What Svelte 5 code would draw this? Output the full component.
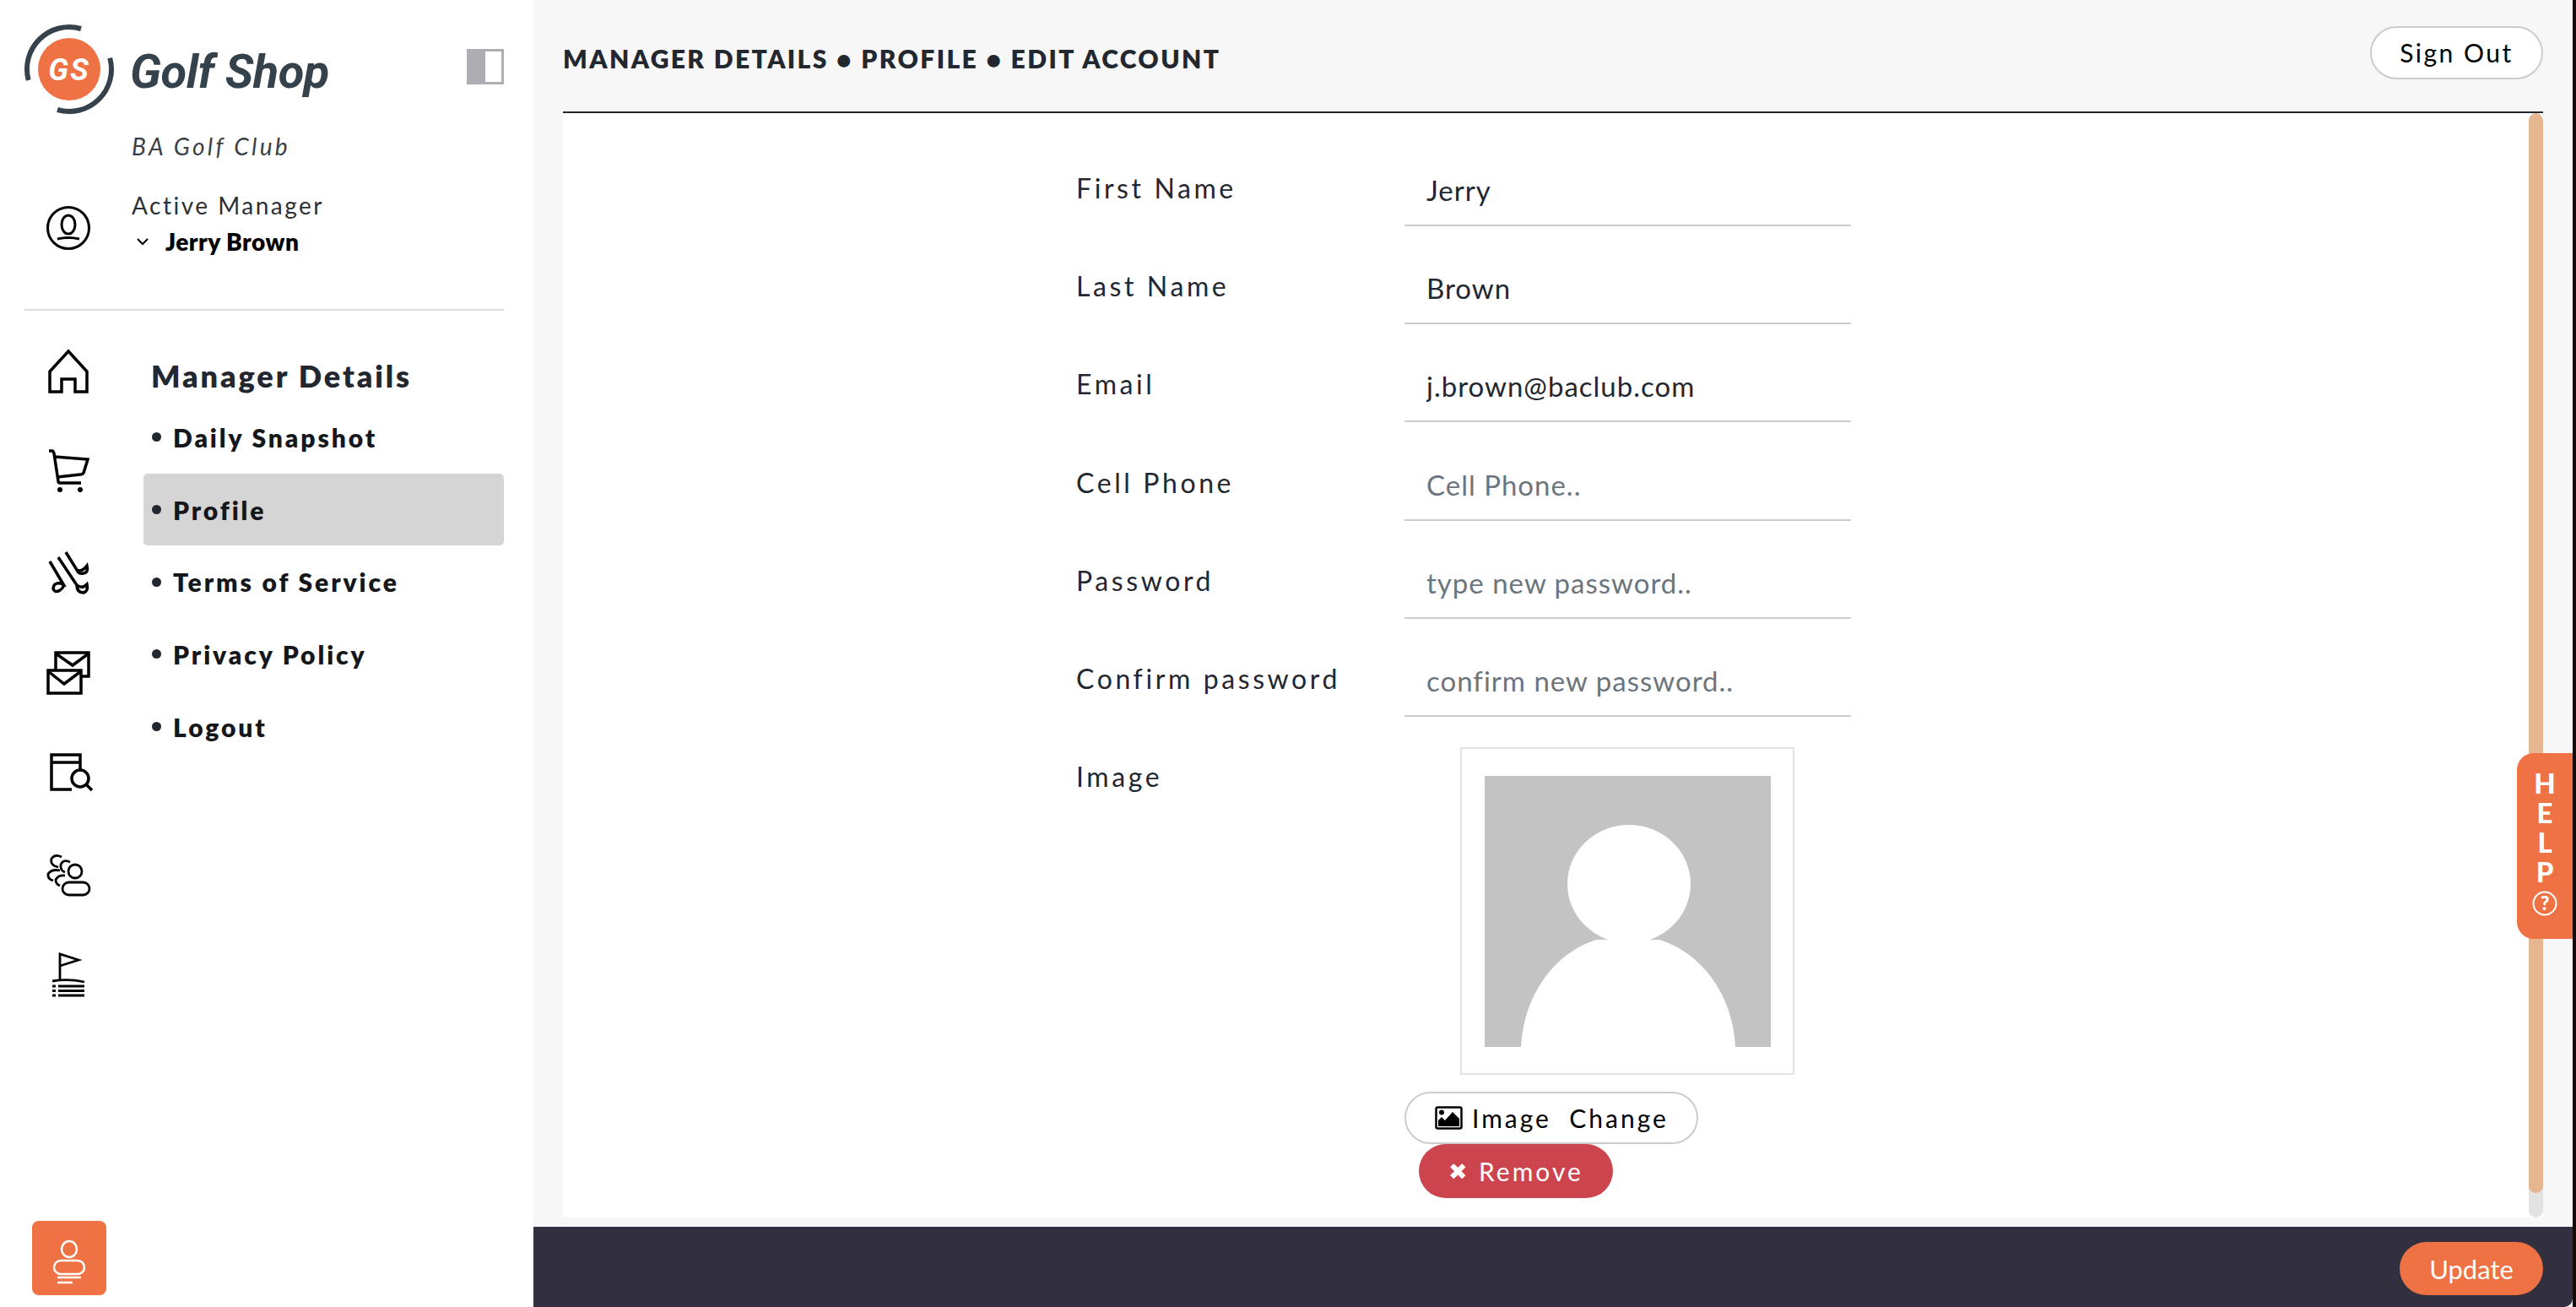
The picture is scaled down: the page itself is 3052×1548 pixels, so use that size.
<script>
  const navItems = [
    { label: 'Daily Snapshot' },
    { label: 'Profile', active: true },
    { label: 'Terms of Service' },
    { label: 'Privacy Policy' },
    { label: 'Logout' }
  ];
  const fields = [
    { label: 'First Name', value: 'Jerry' },
    { label: 'Last Name', value: 'Brown' },
    { label: 'Email', value: 'j.brown@baclub.com' },
    { label: 'Cell Phone', placeholder: 'Cell Phone..' },
    { label: 'Password', placeholder: 'type new password..' },
    { label: 'Confirm password', placeholder: 'confirm new password..' }
  ];
</script>

<div class="page">
  <aside class="sidebar">
    <div class="brand">
      <svg class="logo" viewBox="0 0 120 120" aria-hidden="true">
        <path class="ring" d="M8.700 70 A50 50 0 0 1 71 9" />
        <path class="ring" d="M105.200 43.700 A50 50 0 0 1 43 105" />
        <circle cx="57" cy="57" r="37" fill="#ee7244" />
        <text x="57" y="70" text-anchor="middle" class="gs">GS</text>
      </svg>
      <span class="brand-name">Golf Shop</span>
      <span class="panel-toggle"><span></span></span>
    </div>
    <div class="club">BA Golf Club</div>
    <div class="manager">
      <svg class="manager-icon" viewBox="0 0 56 56" aria-hidden="true">
        <ellipse cx="28" cy="28" rx="24.500" ry="24.500" />
        <ellipse cx="28" cy="24" rx="8" ry="11" />
        <path d="M15 41 Q28 38 41 41" />
      </svg>
      <div class="manager-text">
        <div class="manager-title">Active Manager</div>
        <div class="manager-name">
          <svg class="chev" viewBox="0 0 14 10" aria-hidden="true"><path d="M1 2 L7 8 L13 2" /></svg>
          <b>Jerry Brown</b>
        </div>
      </div>
    </div>
    <hr class="divider" />
    <div class="side-body">
      <nav class="rail">
        <svg viewBox="0 0 56 56" aria-hidden="true"><path d="M28 4 L50 28 V52 H36 V37 H20 V52 H6 V28 Z" /></svg>
        <svg viewBox="0 0 56 56" aria-hidden="true">
          <path d="M5 3 H9 Q10 3 11 6 L16 39 Q16 41 18 41 H43" />
          <path d="M12 10 L51 13 L46 29 Q45 31 42 31 L15 34" />
          <circle class="fill" cx="18" cy="49" r="3" /><circle class="fill" cx="42" cy="49" r="3" />
        </svg>
        <svg viewBox="0 0 56 56" aria-hidden="true">
          <path d="M6 15 L22 42 Q11 38 10 47 Q12 53 18 49 Q23 46 22 42" />
          <path d="M16 10 L38 43 Q44 48 50 42 Q52 50 46 52 Q38 52 38 43" />
          <path d="M25 4 L38 25 Q44 28 50 20 Q52 28 46 29 Q40 30 38 25" />
        </svg>
        <svg viewBox="0 0 56 56" aria-hidden="true">
          <path d="M13 24 V4 H52 V32 H44" />
          <path d="M13 5 L33 19 L52 5" />
          <path d="M4 25 H43 V52 H4 Z" />
          <path d="M4 26 L23 41 L43 26" />
        </svg>
        <svg viewBox="0 0 56 56" aria-hidden="true">
          <path d="M32 47 H8 V6 H42 V24" />
          <path d="M8 15 H42" />
          <circle cx="42" cy="34" r="10" />
          <path d="M49 41 L56 48" />
        </svg>
        <svg viewBox="0 0 56 56" aria-hidden="true">
          <path class="thin" d="M20 8 Q12 4 8 10 Q6 18 16 20" />
          <path class="thin" d="M30 14 Q22 10 19 17 Q18 24 24 26" />
          <circle class="thin" cx="36" cy="25" r="8" />
          <path class="thin" d="M18 24 Q8 22 4 28 Q3 34 10 36" />
          <path class="thin" d="M24 30 Q16 29 13 35 Q13 40 18 42" />
          <rect class="thin" x="21" y="38" width="32" height="15" rx="7.500" />
        </svg>
        <svg viewBox="0 0 56 56" aria-hidden="true">
          <path class="thin" d="M18 36 V4 L40 11 L18 18" />
          <path class="thin" d="M9 36 Q28 33 47 37" />
          <path class="thin" d="M16 42 H47 M16 47.500 H47 M16 53 H47" />
          <path class="thin" d="M9 42 H13 M9 47.500 H13 M9 53 H13" />
        </svg>
      </nav>
      <div class="menu">
        <h2>Manager Details</h2>
        <ul>
          {#each navItems as item}
            <li class:active={item.active}><i></i>{item.label}</li>
          {/each}
        </ul>
      </div>
    </div>
    <button class="account" aria-label="Account">
      <svg viewBox="0 0 48 56" aria-hidden="true">
        <ellipse cx="24" cy="17.500" rx="9" ry="9.500" />
        <rect x="6" y="31" width="36" height="16" rx="8" />
        <path d="M10 51 H38 M10 57 H28" />
      </svg>
    </button>
  </aside>

  <main class="main">
    <header class="topbar">
      <h1>MANAGER DETAILS • PROFILE • EDIT ACCOUNT</h1>
      <button class="sign-out">Sign Out</button>
    </header>
    <section class="content">
      <form class="form">
        {#each fields as f}
          <div class="row">
            <label for={f.label}>{f.label}</label>
            <input id={f.label} value={f.value ?? ''} placeholder={f.placeholder ?? ''} />
          </div>
        {/each}
        <div class="row image-row">
          <span class="field-label">Image</span>
          <div class="image-col">
            <div class="frame">
              <svg viewBox="0 0 339 321" aria-hidden="true">
                <rect width="339" height="321" fill="#c3c3c3" />
                <ellipse cx="171" cy="128" rx="73" ry="70" fill="#fff" />
                <path fill="#fff" d="M43 321 C46 260 82 210 132 194 L207 194 C258 210 294 260 297 321 Z" />
              </svg>
            </div>
            <button type="button" class="change">
              <svg viewBox="0 0 33 28" aria-hidden="true">
                <rect x="1.500" y="1.500" width="30" height="25" rx="2" fill="#fff" stroke="#000" stroke-width="2.500" />
                <circle cx="8" cy="7.500" r="3" fill="#000" />
                <path d="M4 24 V17 L8 13 L12 17 L21 7 L29 15 V24 Z" fill="#000" />
              </svg>
              Image&nbsp; Change
            </button>
            <button type="button" class="remove"><span class="x">✖</span>Remove</button>
          </div>
        </div>
      </form>
      <div class="scrollbar"><div class="thumb"></div><div class="track"></div></div>
    </section>
    <footer class="footer"><button class="update">Update</button></footer>
    <aside class="help">
      <span>H</span><span>E</span><span>L</span><span>P</span>
      <svg viewBox="0 0 30 30" aria-hidden="true">
        <circle cx="15" cy="15" r="13.500" fill="none" stroke="#fff" stroke-width="2" />
        <text x="15" y="23" text-anchor="middle">?</text>
      </svg>
    </aside>
  </main>
</div>

<style>
  :global(body) { margin: 0; background: #170a0a; }
  * { box-sizing: border-box; }
  .page {
    width: 3048px; height: 1548px; display: flex; overflow: hidden;
    font-family: Lato, "Open Sans", sans-serif; color: #212529;
  }
  button { font-family: inherit; cursor: pointer; }

  .sidebar {
    width: 632px; flex: none; background: #fff; display: flex; flex-direction: column;
    padding: 25px 35px 14px 29px;
  }
  .brand { display: flex; align-items: center; height: 120px; }
  .logo { width: 120px; height: 120px; margin-left: -4px; flex: none; }
  .ring { fill: none; stroke: #36424b; stroke-width: 6; }
  .gs { font: italic 700 36px Roboto, sans-serif; fill: #fff; letter-spacing: 2px; }
  .brand-name {
    font: italic 700 56px Roboto, sans-serif; color: #36424b; margin-left: 9px;
    letter-spacing: -0.500px; white-space: nowrap;
  }
  .panel-toggle {
    margin-left: auto; width: 44px; height: 42px; border: 3px solid #adadb2; background: #fff;
    display: block; margin-top: -12px;
  }
  .panel-toggle span { display: block; width: 19px; height: 100%; background: #adadb2; }
  .club {
    margin: 11px 0 0 127px; font-size: 28px; line-height: 34px; font-style: italic;
    letter-spacing: 3.300px; color: #3a3f47; font-weight: 400;
  }
  .manager { display: flex; margin-top: 33px; align-items: center; }
  .manager-icon { width: 56px; height: 56px; margin: 8px 0 0 24px; flex: none; fill: none; stroke: #000; stroke-width: 3; }
  .manager-text { margin-left: 47px; }
  .manager-title { font-size: 28px; line-height: 40px; letter-spacing: 2.500px; color: #2b2f36; }
  .manager-name { display: flex; align-items: center; line-height: 46px; font-size: 28px; color: #000; letter-spacing: 0.500px; }
  .manager-name b { font-weight: 800; }
  .chev { width: 14px; height: 10px; margin: 0 20px 0 6px; fill: none; stroke: #000; stroke-width: 2; }
  .divider { border: 0; height: 2px; background: #ddd; margin: 57px 0 0; width: 568px; }

  .side-body { display: flex; flex: 1; margin-top: 44px; }
  .rail { width: 56px; margin-left: 24px; display: flex; flex-direction: column; gap: 63px; flex: none; }
  .rail svg { width: 56px; height: 56px; display: block; overflow: visible; fill: none; stroke: #000; stroke-width: 3.500; }
  .rail svg .fill { fill: #000; stroke: none; }
  .rail svg .thin { stroke-width: 2.800; }
  .menu { width: 427px; margin-left: 61px; }
  .menu h2 { font-size: 36px; font-weight: 800; letter-spacing: 2.900px; color: #23272f; margin: 13px 0 0 9px; line-height: 40px; }
  .menu ul { list-style: none; margin: 10px 0 0; padding: 0; }
  .menu li {
    height: 85.700px; display: flex; align-items: center; padding: 0 0 0 10px;
    font-size: 30px; font-weight: 800; letter-spacing: 2.900px; border-radius: 5px; color: #15171b;
  }
  .menu li i { width: 11px; height: 11px; border-radius: 50%; background: #23272f; margin-right: 14px; flex: none; }
  .menu li.active { background: #d5d5d5; }
  .account {
    width: 88px; height: 88px; margin-left: 9px; background: #ee7244; border: 0; border-radius: 8px;
    padding: 0; display: flex; align-items: center; justify-content: center; flex: none;
  }
  .account svg { width: 48px; height: 56px; fill: none; stroke: #fff; stroke-width: 2.500; overflow: visible; }

  .main { flex: 1; min-width: 0; background: #f7f7f7; display: flex; flex-direction: column; position: relative; }
  .topbar {
    height: 134px; flex: none; margin: 0 35px; border-bottom: 2px solid #23272f;
    display: flex; justify-content: space-between; align-items: flex-start; padding-top: 31px;
  }
  .topbar h1 { margin: 16px 0 0; font-size: 30px; line-height: 44px; font-weight: 800; letter-spacing: 2.400px; color: #23272f; white-space: nowrap; }
  .sign-out {
    width: 205px; height: 63px; border-radius: 32px; border: 2px solid #ccc; background: #fff;
    font-size: 30px; letter-spacing: 2.500px; color: #000; padding: 0 0 2px;
  }
  .content { flex: 1; min-height: 0; margin: 0 35px 11px; background: #fff; display: flex; }
  .form { flex: 1; padding: 31px 0 0 608px; }
  .row { display: flex; height: 116.200px; align-items: flex-start; }
  .row label, .field-label {
    width: 389px; flex: none; font-size: 32px; line-height: 40px; letter-spacing: 3.600px;
    color: #23272f; margin-top: 38px; display: block;
  }
  .row input {
    width: 529px; height: 84px; margin-top: 19px; border: 0; border-bottom: 2px solid #ccc; outline: 0;
    padding: 22px 26px; font: 400 33px Lato, sans-serif; color: #23272f; background: transparent;
    letter-spacing: 1px;
  }
  .row input::placeholder { color: #6c757d; opacity: 1; }
  .image-row { height: auto; }
  .image-col { width: 529px; margin-top: 23px; }
  .frame { width: 396px; height: 388px; margin-left: 66px; border: 2px solid #dee2e6; padding: 32px 0 0 27px; }
  .frame svg { width: 339px; height: 321px; display: block; }
  .change {
    margin-top: 20px; height: 62px; width: 348px; border-radius: 31px; border: 2px solid #ccc; background: #fff;
    display: flex; align-items: center; padding: 0 0 0 34px; font-size: 30px; letter-spacing: 3px; color: #000;
  }
  .change svg { width: 33px; height: 28px; margin-right: 11px; flex: none; }
  .remove {
    display: flex; align-items: center; margin-left: 17px; height: 64px; width: 230px; border-radius: 32px;
    border: 0; background: #cc444d; color: #fff; font-size: 30px; letter-spacing: 3px; padding: 0 0 0 35px;
  }
  .x { font-size: 27px; margin-right: 13px; letter-spacing: 0; line-height: 30px; }
  .scrollbar { width: 17px; flex: none; display: flex; flex-direction: column; background: #e2e2e2; border-radius: 9px; overflow: hidden; }
  .thumb { flex: 1; background: #e6b690; border-radius: 9px; }
  .track { height: 29px; flex: none; }
  .footer {
    height: 95px; flex: none; background: #32303f; display: flex; justify-content: flex-end; align-items: flex-start;
    padding: 18px 35px 0 0; border-bottom-right-radius: 10px;
  }
  .update {
    width: 170px; height: 63px; border-radius: 32px; border: 0; background: #ee7244; color: #fff;
    font-size: 31px; padding: 0;
  }
  .help {
    position: absolute; right: 0; top: 892px; width: 66px; height: 220px; background: #ee7244;
    border-radius: 20px 0 0 20px; display: flex; flex-direction: column; align-items: center; padding-top: 18px; color: #fff;
    font: 900 33px/35px Lato, sans-serif;
  }
  .help span { height: 35px; display: block; }
  .help svg { width: 30px; height: 30px; margin-top: 5px; }
  .help text { font: 900 23px Lato, sans-serif; fill: #fff; }
</style>
